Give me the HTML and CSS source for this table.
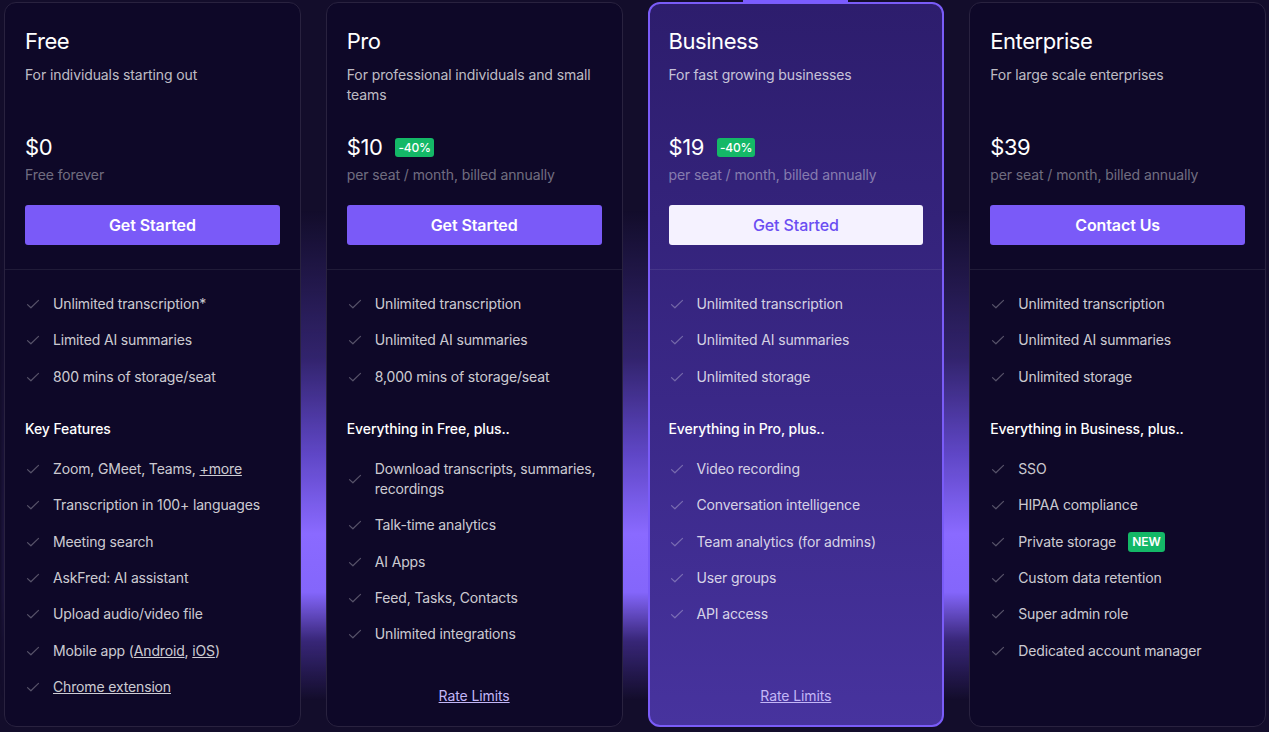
FILE: index.html
```html
<!DOCTYPE html>
<html lang="en">
<head>
  <meta charset="UTF-8">
  <meta name="viewport" content="width=device-width, initial-scale=1.0">
  <title>Pricing</title>
  <link rel="stylesheet" href="styles.css">
</head>
<body>
  <div class="pricing">
    <div class="glow"></div>

    <div class="plans">
      <!-- Free -->
      <div class="card">
        <div class="card-head">
          <h2 class="plan-name">Free</h2>
          <p class="plan-desc">For individuals starting out</p>
          <div class="price-row"><span class="price">$0</span></div>
          <p class="price-note">Free forever</p>
          <a class="btn" href="#">Get Started</a>
        </div>
        <div class="card-body">
          <ul class="features">
            <li><svg class="check" viewBox="0 0 16 16"><path d="M2.5 8.6l3.4 3.2 7.6-7.4"/></svg><span>Unlimited transcription*</span></li>
            <li><svg class="check" viewBox="0 0 16 16"><path d="M2.5 8.6l3.4 3.2 7.6-7.4"/></svg><span>Limited AI summaries</span></li>
            <li><svg class="check" viewBox="0 0 16 16"><path d="M2.5 8.6l3.4 3.2 7.6-7.4"/></svg><span>800 mins of storage/seat</span></li>
          </ul>
          <h3 class="features-title">Key Features</h3>
          <ul class="features">
            <li><svg class="check" viewBox="0 0 16 16"><path d="M2.5 8.6l3.4 3.2 7.6-7.4"/></svg><span>Zoom, GMeet, Teams, <a href="#">+more</a></span></li>
            <li><svg class="check" viewBox="0 0 16 16"><path d="M2.5 8.6l3.4 3.2 7.6-7.4"/></svg><span>Transcription in 100+ languages</span></li>
            <li><svg class="check" viewBox="0 0 16 16"><path d="M2.5 8.6l3.4 3.2 7.6-7.4"/></svg><span>Meeting search</span></li>
            <li><svg class="check" viewBox="0 0 16 16"><path d="M2.5 8.6l3.4 3.2 7.6-7.4"/></svg><span>AskFred: AI assistant</span></li>
            <li><svg class="check" viewBox="0 0 16 16"><path d="M2.5 8.6l3.4 3.2 7.6-7.4"/></svg><span>Upload audio/video file</span></li>
            <li><svg class="check" viewBox="0 0 16 16"><path d="M2.5 8.6l3.4 3.2 7.6-7.4"/></svg><span>Mobile app (<a href="#">Android</a>, <a href="#">iOS</a>)</span></li>
            <li><svg class="check" viewBox="0 0 16 16"><path d="M2.5 8.6l3.4 3.2 7.6-7.4"/></svg><span><a href="#">Chrome extension</a></span></li>
          </ul>
        </div>
      </div>

      <!-- Pro -->
      <div class="card">
        <div class="card-head">
          <h2 class="plan-name">Pro</h2>
          <p class="plan-desc">For professional individuals and small teams</p>
          <div class="price-row"><span class="price">$10</span><span class="badge">-40%</span></div>
          <p class="price-note">per seat / month, billed annually</p>
          <a class="btn" href="#">Get Started</a>
        </div>
        <div class="card-body">
          <ul class="features">
            <li><svg class="check" viewBox="0 0 16 16"><path d="M2.5 8.6l3.4 3.2 7.6-7.4"/></svg><span>Unlimited transcription</span></li>
            <li><svg class="check" viewBox="0 0 16 16"><path d="M2.5 8.6l3.4 3.2 7.6-7.4"/></svg><span>Unlimited AI summaries</span></li>
            <li><svg class="check" viewBox="0 0 16 16"><path d="M2.5 8.6l3.4 3.2 7.6-7.4"/></svg><span>8,000 mins of storage/seat</span></li>
          </ul>
          <h3 class="features-title">Everything in Free, plus..</h3>
          <ul class="features">
            <li><svg class="check" viewBox="0 0 16 16"><path d="M2.5 8.6l3.4 3.2 7.6-7.4"/></svg><span>Download transcripts, summaries, recordings</span></li>
            <li><svg class="check" viewBox="0 0 16 16"><path d="M2.5 8.6l3.4 3.2 7.6-7.4"/></svg><span>Talk-time analytics</span></li>
            <li><svg class="check" viewBox="0 0 16 16"><path d="M2.5 8.6l3.4 3.2 7.6-7.4"/></svg><span>AI Apps</span></li>
            <li><svg class="check" viewBox="0 0 16 16"><path d="M2.5 8.6l3.4 3.2 7.6-7.4"/></svg><span>Feed, Tasks, Contacts</span></li>
            <li><svg class="check" viewBox="0 0 16 16"><path d="M2.5 8.6l3.4 3.2 7.6-7.4"/></svg><span>Unlimited integrations</span></li>
          </ul>
          <a class="rate-link" href="#">Rate Limits</a>
        </div>
      </div>

      <!-- Business -->
      <div class="card featured">
        <div class="card-head">
          <h2 class="plan-name">Business</h2>
          <p class="plan-desc">For fast growing businesses</p>
          <div class="price-row"><span class="price">$19</span><span class="badge">-40%</span></div>
          <p class="price-note">per seat / month, billed annually</p>
          <a class="btn btn-light" href="#">Get Started</a>
        </div>
        <div class="card-body">
          <ul class="features">
            <li><svg class="check" viewBox="0 0 16 16"><path d="M2.5 8.6l3.4 3.2 7.6-7.4"/></svg><span>Unlimited transcription</span></li>
            <li><svg class="check" viewBox="0 0 16 16"><path d="M2.5 8.6l3.4 3.2 7.6-7.4"/></svg><span>Unlimited AI summaries</span></li>
            <li><svg class="check" viewBox="0 0 16 16"><path d="M2.5 8.6l3.4 3.2 7.6-7.4"/></svg><span>Unlimited storage</span></li>
          </ul>
          <h3 class="features-title">Everything in Pro, plus..</h3>
          <ul class="features">
            <li><svg class="check" viewBox="0 0 16 16"><path d="M2.5 8.6l3.4 3.2 7.6-7.4"/></svg><span>Video recording</span></li>
            <li><svg class="check" viewBox="0 0 16 16"><path d="M2.5 8.6l3.4 3.2 7.6-7.4"/></svg><span>Conversation intelligence</span></li>
            <li><svg class="check" viewBox="0 0 16 16"><path d="M2.5 8.6l3.4 3.2 7.6-7.4"/></svg><span>Team analytics (for admins)</span></li>
            <li><svg class="check" viewBox="0 0 16 16"><path d="M2.5 8.6l3.4 3.2 7.6-7.4"/></svg><span>User groups</span></li>
            <li><svg class="check" viewBox="0 0 16 16"><path d="M2.5 8.6l3.4 3.2 7.6-7.4"/></svg><span>API access</span></li>
          </ul>
          <a class="rate-link" href="#">Rate Limits</a>
        </div>
      </div>

      <!-- Enterprise -->
      <div class="card">
        <div class="card-head">
          <h2 class="plan-name">Enterprise</h2>
          <p class="plan-desc">For large scale enterprises</p>
          <div class="price-row"><span class="price">$39</span></div>
          <p class="price-note">per seat / month, billed annually</p>
          <a class="btn" href="#">Contact Us</a>
        </div>
        <div class="card-body">
          <ul class="features">
            <li><svg class="check" viewBox="0 0 16 16"><path d="M2.5 8.6l3.4 3.2 7.6-7.4"/></svg><span>Unlimited transcription</span></li>
            <li><svg class="check" viewBox="0 0 16 16"><path d="M2.5 8.6l3.4 3.2 7.6-7.4"/></svg><span>Unlimited AI summaries</span></li>
            <li><svg class="check" viewBox="0 0 16 16"><path d="M2.5 8.6l3.4 3.2 7.6-7.4"/></svg><span>Unlimited storage</span></li>
          </ul>
          <h3 class="features-title">Everything in Business, plus..</h3>
          <ul class="features">
            <li><svg class="check" viewBox="0 0 16 16"><path d="M2.5 8.6l3.4 3.2 7.6-7.4"/></svg><span>SSO</span></li>
            <li><svg class="check" viewBox="0 0 16 16"><path d="M2.5 8.6l3.4 3.2 7.6-7.4"/></svg><span>HIPAA compliance</span></li>
            <li><svg class="check" viewBox="0 0 16 16"><path d="M2.5 8.6l3.4 3.2 7.6-7.4"/></svg><span>Private storage</span><span class="badge badge-new">NEW</span></li>
            <li><svg class="check" viewBox="0 0 16 16"><path d="M2.5 8.6l3.4 3.2 7.6-7.4"/></svg><span>Custom data retention</span></li>
            <li><svg class="check" viewBox="0 0 16 16"><path d="M2.5 8.6l3.4 3.2 7.6-7.4"/></svg><span>Super admin role</span></li>
            <li><svg class="check" viewBox="0 0 16 16"><path d="M2.5 8.6l3.4 3.2 7.6-7.4"/></svg><span>Dedicated account manager</span></li>
          </ul>
        </div>
      </div>
    </div>
  </div>
</body>
</html>
```

FILE: styles.css
```css
html, body {
  margin: 0;
  padding: 0;
  height: 100%;
  overflow: hidden;
  background-color: #130d2b;
  font-family: Inter, "Noto Sans", sans-serif;
  color: #fff;
}

.pricing {
  position: relative;
  height: 732px;
}

/* purple glow behind the cards */
.glow {
  position: absolute;
  left: 0;
  right: 0;
  top: 210px;
  height: 490px;
  background: linear-gradient(to bottom,
    rgba(110, 80, 230, 0) 0%,
    rgba(100, 72, 215, 0.38) 30%,
    rgba(115, 86, 238, 0.8) 50%,
    #8a6aff 66%,
    #8466fb 78%,
    rgba(80, 55, 170, 0.6) 88%,
    rgba(30, 20, 70, 0) 100%);
  -webkit-mask-image: linear-gradient(to right, transparent 0, #000 40px, #000 calc(100% - 40px), transparent 100%);
  mask-image: linear-gradient(to right, transparent 0, #000 40px, #000 calc(100% - 40px), transparent 100%);
}

.plans {
  position: relative;
  display: grid;
  grid-template-columns: repeat(4, 1fr);
  gap: 25px;
  padding: 2px 3px 0 4px;
  height: 725px;
}

.card {
  position: relative;
  display: flex;
  flex-direction: column;
  background-color: #0e0828;
  border: 1px solid #29223f;
  border-radius: 12px;
}

.card.featured {
  background: linear-gradient(to bottom, #2d1d6d 0%, #3a2887 55%, #47339e 100%);
  border: 2px solid #7a5cf8;
}

.card.featured::before {
  content: "";
  position: absolute;
  top: -4px;
  left: 93px;
  width: 105px;
  height: 3px;
  background-color: #7b5cff;
}

.card-head {
  padding: 24px 20px;
  border-bottom: 1px solid rgba(255, 255, 255, 0.08);
}

.card.featured .card-head {
  padding: 23px 19px 24px;
}

.plan-name {
  margin: 0;
  font-size: 22px;
  line-height: 28px;
  font-weight: 400;
  letter-spacing: -0.02em;
}

.plan-desc {
  margin: 10px 0 0;
  min-height: 40px;
  font-size: 14px;
  line-height: 20px;
  letter-spacing: -0.1px;
  color: rgba(255, 255, 255, 0.74);
}

.price-row {
  display: flex;
  align-items: center;
  gap: 13px;
  margin-top: 28px;
  height: 28px;
}

.price {
  font-size: 22px;
  line-height: 28px;
  letter-spacing: -0.02em;
}

.badge {
  display: inline-block;
  background-color: #14b867;
  color: #fff;
  font-size: 12px;
  font-weight: 500;
  line-height: 19px;
  padding: 0 3px;
  border-radius: 3px;
  letter-spacing: -0.2px;
}

.price-note {
  margin: 4px 0 0;
  font-size: 14px;
  line-height: 20px;
  letter-spacing: -0.1px;
  color: rgba(255, 255, 255, 0.42);
}

.btn {
  display: block;
  margin-top: 20px;
  height: 40px;
  line-height: 40px;
  text-align: center;
  background-color: #7a5af8;
  color: #fff;
  font-size: 16px;
  font-weight: 600;
  letter-spacing: -0.1px;
  text-decoration: none;
  border-radius: 3px;
}

.btn-light {
  background-color: #f5f2ff;
  color: #6b4ef2;
  font-weight: 500;
}

.card-body {
  flex: 1;
  display: flex;
  flex-direction: column;
  padding: 24px 20px 20px;
}

.card.featured .card-body {
  padding: 24px 19px 19px;
}

.features {
  list-style: none;
  margin: 0;
  padding: 0;
  display: flex;
  flex-direction: column;
  gap: 16.4px;
}

.features li {
  display: flex;
  align-items: center;
  font-size: 14px;
  line-height: 20px;
  letter-spacing: -0.15px;
  color: rgba(255, 255, 255, 0.8);
}

.features a {
  color: inherit;
}

.check {
  flex: none;
  width: 16px;
  height: 16px;
  margin-right: 12px;
  fill: none;
  stroke: rgba(255, 255, 255, 0.3);
  stroke-width: 1.2;
  stroke-linecap: round;
  stroke-linejoin: round;
}

.badge-new {
  margin-left: 12px;
  font-size: 12px;
  font-weight: 600;
  line-height: 20px;
  padding: 0 4px;
  letter-spacing: 0;
}

.features-title {
  margin: 32px 0 20px;
  font-size: 14px;
  line-height: 20px;
  font-weight: 500;
  letter-spacing: -0.1px;
  color: #fff;
}

.rate-link {
  margin-top: auto;
  align-self: center;
  font-size: 14px;
  line-height: 20px;
  letter-spacing: -0.1px;
  color: #c3b6f7;
}
```
